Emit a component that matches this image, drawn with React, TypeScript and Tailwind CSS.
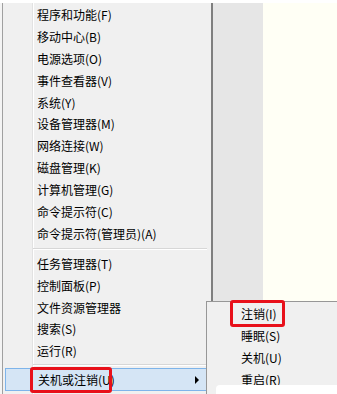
import React from "react";

const groupA = [
  "程序和功能(F)",
  "移动中心(B)",
  "电源选项(O)",
  "事件查看器(V)",
  "系统(Y)",
  "设备管理器(M)",
  "网络连接(W)",
  "磁盘管理(K)",
  "计算机管理(G)",
  "命令提示符(C)",
  "命令提示符(管理员)(A)",
];

const groupB = ["任务管理器(T)", "控制面板(P)", "文件资源管理器", "搜索(S)", "运行(R)"];

const subItems = ["注销(I)", "睡眠(S)", "关机(U)", "重启(R)"];

function Item({ label }: { label: string }) {
  return (
    <div className="h-[21.9px] flex items-center pl-[34px] text-[12px] text-black whitespace-nowrap">
      {label}
    </div>
  );
}

function Separator({ h }: { h: string }) {
  return (
    <div className={`${h} flex flex-col justify-center ml-[30px] mr-[4px]`}>
      <div className="h-px bg-[#d7d7d7]" />
      <div className="h-px bg-white" />
    </div>
  );
}

export default function App() {
  return (
    <div
      className="relative w-[337px] h-[394px] overflow-hidden bg-white flex flex-col"
      style={{ fontFamily: '"Noto Sans CJK SC", "Noto Sans", sans-serif' }}
    >
      <div className="h-[3px] bg-white shrink-0" />
      <div className="flex flex-1">
        {/* Main context menu */}
        <div className="w-[213px] flex shrink-0">
          <div className="w-[2px] bg-[#f4f4f4]" />
          <div className="flex-1 flex flex-col pt-[1px] border-l border-[#a0a0a0] border-r-2 border-r-[#7f7f7f] bg-[linear-gradient(to_right,#f0f0f0_29px,#e2e2e2_29px,#e2e2e2_30px,#ffffff_30px,#ffffff_31px,#f0f0f0_31px)]">
            {groupA.map((l) => (
              <Item key={l} label={l} />
            ))}
            <Separator h="h-[8px]" />
            {groupB.map((l) => (
              <Item key={l} label={l} />
            ))}
            <Separator h="h-[6px]" />
            <div className="ml-[2px] mr-[1px] h-[23px] flex items-center justify-between pl-[32px] pr-[10px] bg-[#d5e5f5] border border-[#7eb4ea] text-[12px] text-black whitespace-nowrap">
              <span>关机或注销(U)</span>
              <span className="w-0 h-0 border-y-[4px] border-y-transparent border-l-[4px] border-l-black" />
            </div>
          </div>
        </div>
        {/* desktop strip */}
        <div className="w-[50px] shrink-0 bg-[#e6e6e6]" />
        <div className="flex-1 bg-[#fffff5]" />
      </div>

      {/* Sub menu */}
      <div className="absolute left-[206px] top-[301px] w-[140px] h-[110px] bg-[#f0f0f0] border border-[#979797] pt-[1px]">
        {subItems.map((l) => (
          <Item key={l} label={l} />
        ))}
      </div>

      {/* white smudge at bottom */}
      <div className="absolute left-[216px] top-[385px] w-[130px] h-[14px] bg-white rounded-tl-[4px]" />

      {/* red highlight boxes */}
      <div className="absolute left-[30px] top-[367px] w-[82px] h-[26px] border-[3px] border-[#e8101a] rounded-[3px]" />
      <div className="absolute left-[230px] top-[300px] w-[55px] h-[27px] border-[3px] border-[#e8101a] rounded-[3px]" />
    </div>
  );
}
